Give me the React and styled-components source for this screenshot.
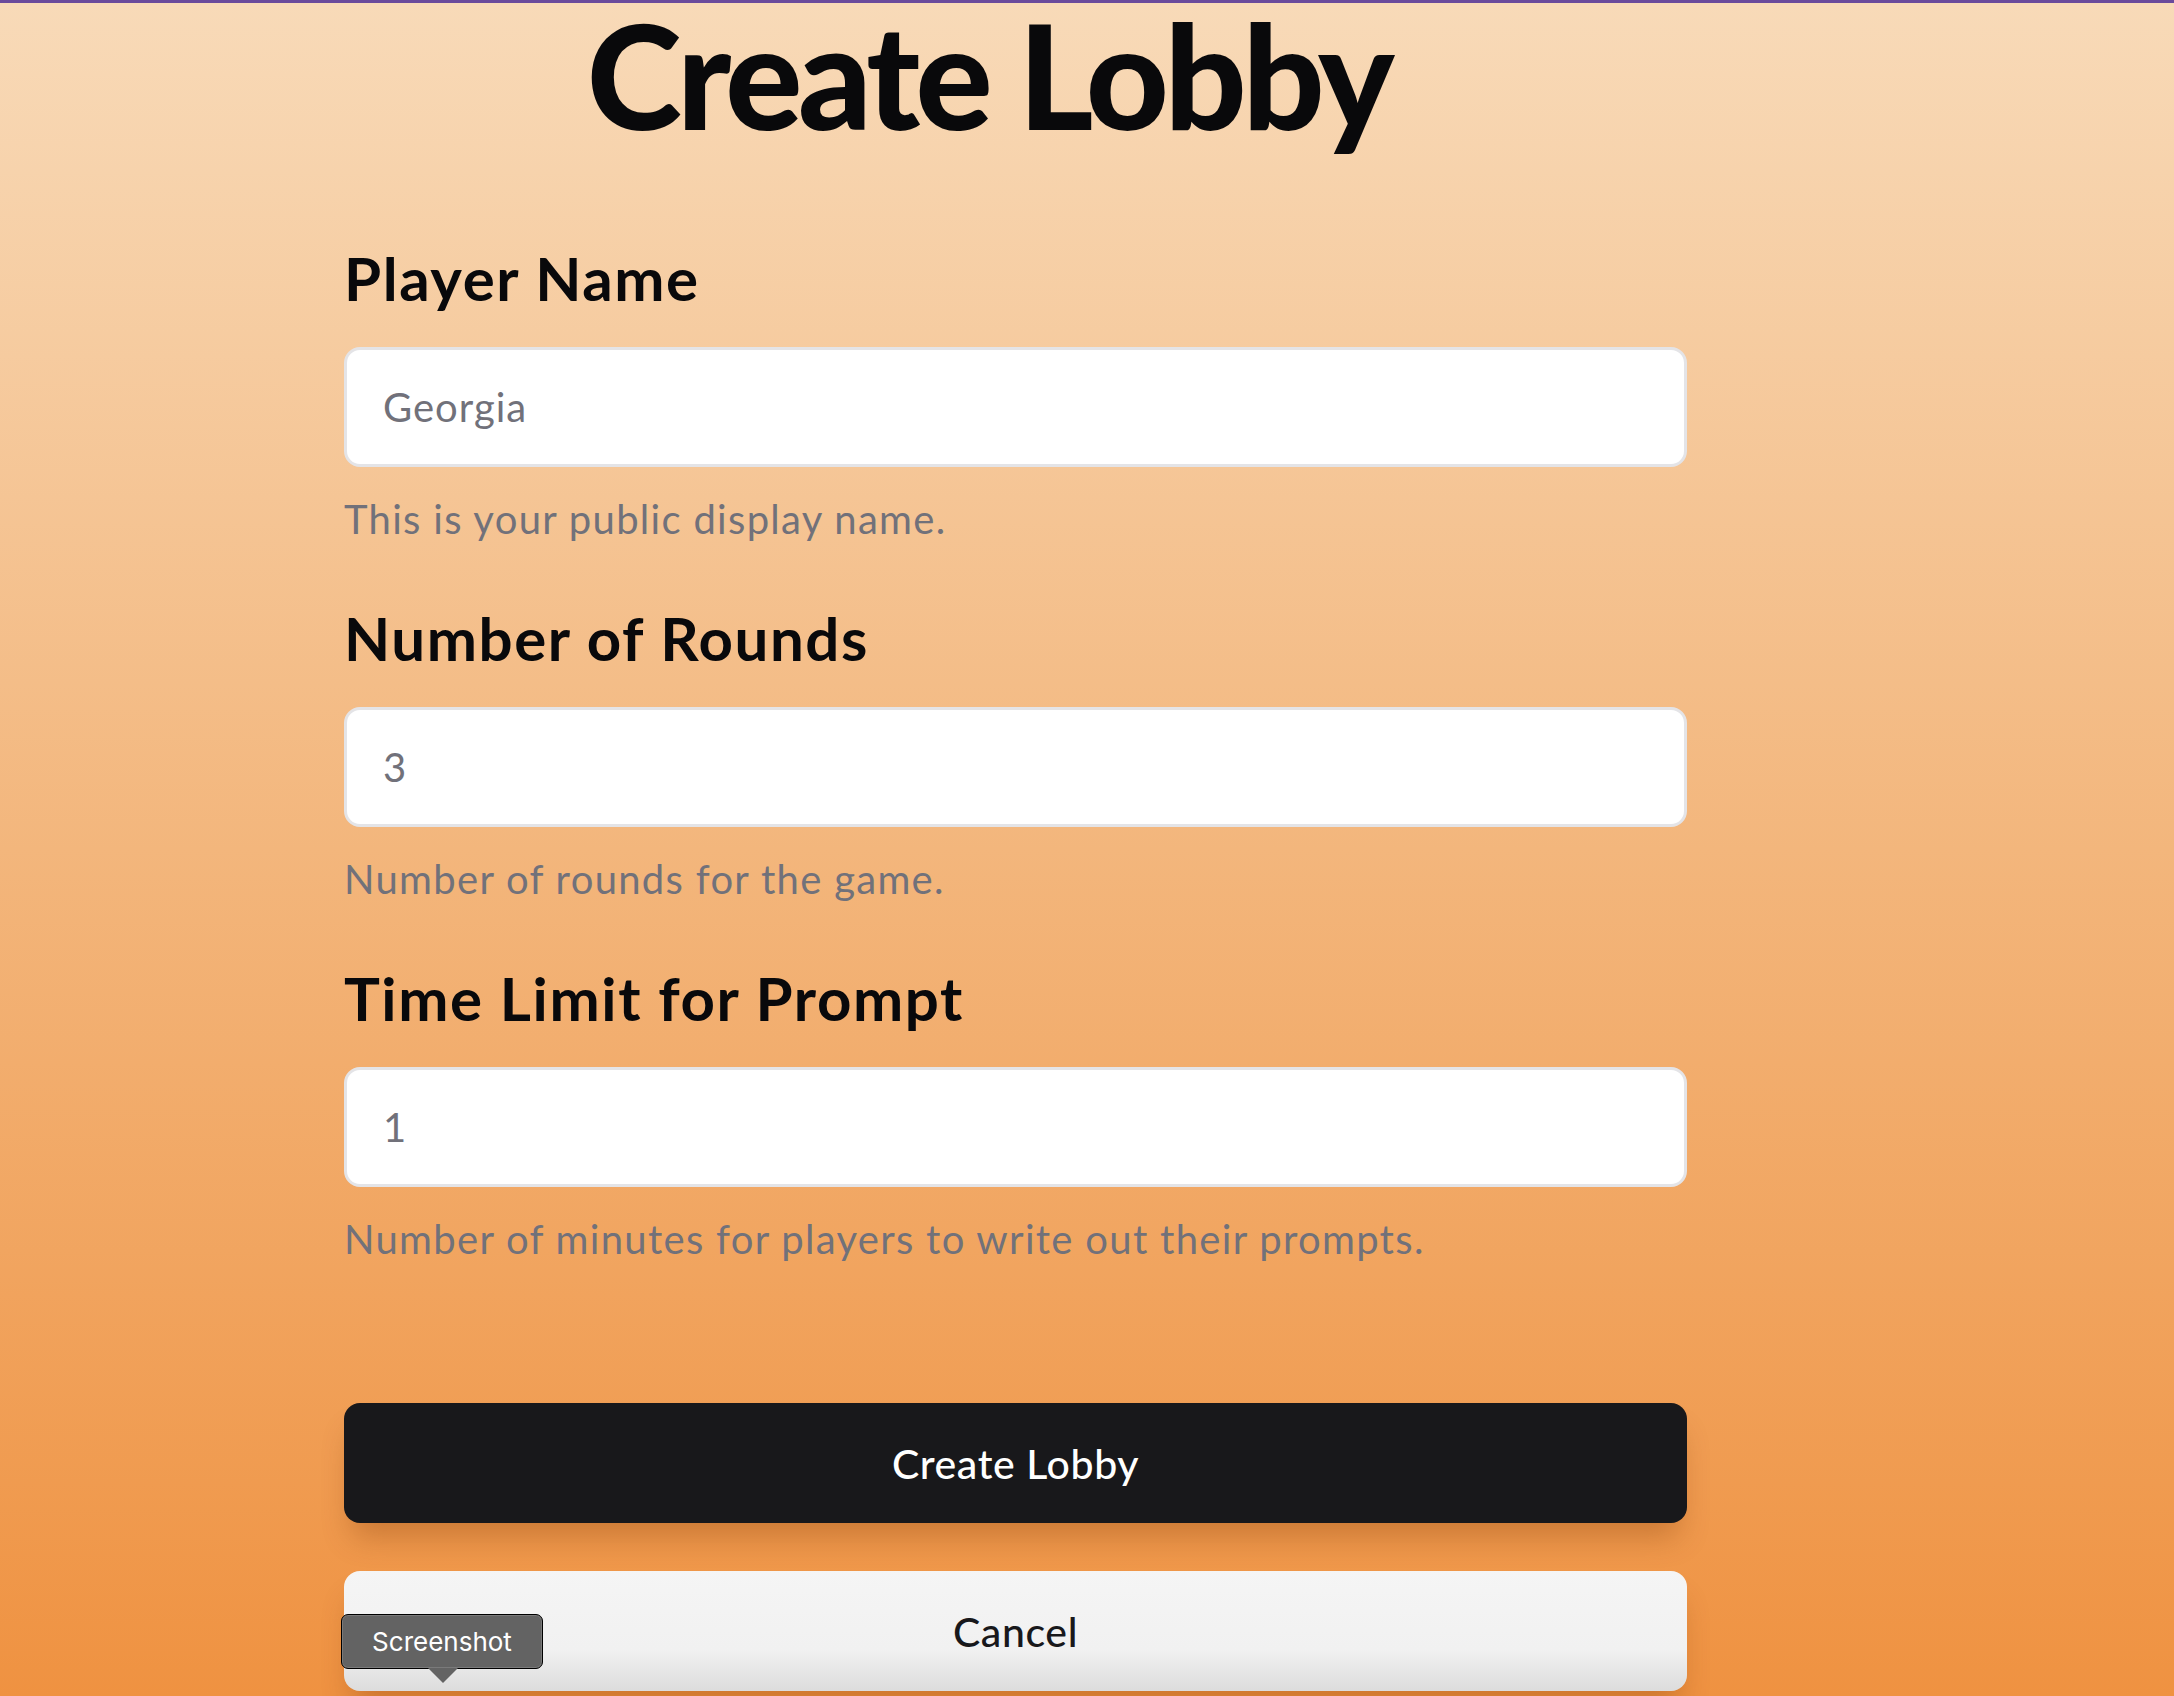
import React from "react";
import styled, { createGlobalStyle } from "styled-components";

const GlobalStyle = createGlobalStyle`
  html, body {
    margin: 0;
    padding: 0;
  }
  body {
    font-family: "Lato", "Noto Sans", sans-serif;
    color: #09090b;
  }
  * { box-sizing: border-box; }
`;

const Page = styled.div`
  position: relative;
  min-height: 100vh;
  background: linear-gradient(180deg, #f8dab8 0%, #f3b67c 50%, #ef9241 100%);
  border-top: 3px solid #6a4a9c;
  overflow: hidden;
`;

const Column = styled.main`
  width: 1343px;
  margin-left: 344px;
  display: flex;
  flex-direction: column;
`;

const Title = styled.h1`
  margin: 0 54px 0 0;
  padding: 0 0 20px;
  font-family: "Lato", "Noto Sans", sans-serif;
  font-weight: 900;
  font-size: 144px;
  line-height: 1;
  letter-spacing: -4.4px;
  text-align: center;
  color: #09090b;
`;

const Form = styled.form`
  display: flex;
  flex-direction: column;
  gap: 69.5px;
  margin-top: 81px;
`;

const Field = styled.div`
  display: flex;
  flex-direction: column;
`;

const Label = styled.label`
  font-size: 60px;
  font-weight: 700;
  line-height: 1;
  color: #09090b;
  letter-spacing: 1.6px;
`;

const Input = styled.input`
  margin-top: 39px;
  height: 120px;
  width: 100%;
  padding: 0 36px;
  border: 3px solid #e4e4e7;
  border-radius: 16px;
  background: #ffffff;
  font-family: "Lato", "Noto Sans", sans-serif;
  font-size: 40px;
  letter-spacing: 1px;
  color: #71717a;
  outline: none;
`;

const Helper = styled.p`
  margin: 31.5px 0 0;
  font-size: 40px;
  line-height: 1;
  color: #71717a;
  letter-spacing: 1.3px;
`;

const Actions = styled.div`
  display: flex;
  flex-direction: column;
  gap: 48px;
  margin-top: 144.5px;
`;

const Button = styled.button`
  height: 120px;
  width: 100%;
  border: none;
  border-radius: 16px;
  font-family: "Lato", "Noto Sans", sans-serif;
  font-size: 41px;
  font-weight: 500;
  letter-spacing: 0.6px;
  cursor: pointer;
  color: ${(p) => (p.$variant === "primary" ? "#ffffff" : "#18181b")};
  background: ${(p) =>
    p.$variant === "primary"
      ? "#18181b"
      : "linear-gradient(180deg, #f5f5f5 0%, #f1f1f1 65%, #dcdcdc 100%)"};
  box-shadow: 0 22px 30px -8px rgba(120, 50, 0, 0.3);
`;

const Tooltip = styled.div`
  position: absolute;
  left: 341px;
  top: 1611px;
  width: 202px;
  height: 55px;
  border-radius: 7px;
  background: #636363;
  border: 1px solid #000;
  box-shadow: inset 0 0 0 1px #7a7a7a;
  color: #ffffff;
  font-family: "Inter", "Liberation Sans", sans-serif;
  font-size: 26px;
  display: flex;
  align-items: center;
  justify-content: center;

  &::after {
    content: "";
    position: absolute;
    left: 86px;
    bottom: -15px;
    width: 0;
    height: 0;
    border-left: 15px solid transparent;
    border-right: 15px solid transparent;
    border-top: 15px solid #636363;
  }
`;

const fields = [
  {
    id: "name",
    label: "Player Name",
    value: "Georgia",
    help: "This is your public display name.",
  },
  {
    id: "rounds",
    label: "Number of Rounds",
    value: "3",
    help: "Number of rounds for the game.",
  },
  {
    id: "time",
    label: "Time Limit for Prompt",
    value: "1",
    help: "Number of minutes for players to write out their prompts.",
  },
];

export default function App() {
  return (
    <>
      <GlobalStyle />
      <Page>
        <Column>
          <Title>Create Lobby</Title>
          <Form onSubmit={(e) => e.preventDefault()}>
            {fields.map((f) => (
              <Field key={f.id}>
                <Label htmlFor={f.id}>{f.label}</Label>
                <Input id={f.id} defaultValue={f.value} />
                <Helper>{f.help}</Helper>
              </Field>
            ))}
          </Form>
          <Actions>
            <Button type="button" $variant="primary">
              Create Lobby
            </Button>
            <Button type="button" $variant="secondary">
              Cancel
            </Button>
          </Actions>
        </Column>
        <Tooltip>Screenshot</Tooltip>
      </Page>
    </>
  );
}
